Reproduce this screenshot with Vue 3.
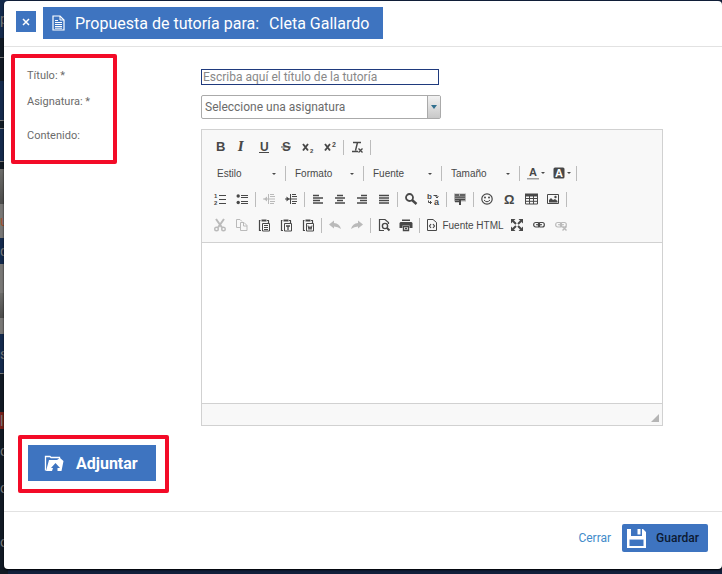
<template>
  <div class="page">
    <div class="backdrop" aria-hidden="true">
      <div v-for="(s, i) in strips" :key="i" class="strip" :class="s.kind" :style="{ height: s.h + 'px' }">{{ s.text }}</div>
    </div>

    <form class="modal" role="dialog" aria-labelledby="modal-title" @submit.prevent>
      <header class="modal-header">
        <button type="button" class="close" aria-label="Cerrar ventana">
          <svg width="8" height="8" viewBox="0 0 8 8"><path d="M1 1l6 6M7 1l-6 6" stroke="#fff" stroke-width="1.5" /></svg>
        </button>
        <h1 id="modal-title" class="title">
          <svg width="13" height="16" viewBox="0 0 13 16">
            <path d="M1 1h7l4 4v10H1z" fill="none" stroke="#fff" stroke-width="1.2" />
            <path d="M8 1v4h4" fill="none" stroke="#fff" />
            <path d="M3 5.5h3M3 7.5h7M3 9.5h7M3 11.5h7M3 13.2h7" stroke="#fff" />
          </svg>
          <span>Propuesta de tutoría para:</span>
          <span>Cleta Gallardo</span>
        </h1>
      </header>

      <div class="modal-body">
        <div class="form-row">
          <div class="labels">
            <label for="titulo">Título: *</label>
            <label for="asignatura">Asignatura: *</label>
            <label for="contenido" class="label-content">Contenido:</label>
          </div>

          <div class="fields">
            <input id="titulo" v-model="titulo" type="text" class="text-input" placeholder="Escriba aquí el título de la tutoría" />
            <div class="select-box">
              <select id="asignatura" v-model="asignatura">
                <option value="">Seleccione una asignatura</option>
              </select>
              <span class="select-arrow">
                <svg width="6" height="4" viewBox="0 0 6 4"><path d="M0 0h6L3 4z" fill="#31708f" /></svg>
              </span>
            </div>

            <div class="editor">
              <div class="toolbar">
                <div v-for="(row, r) in rows" :key="r" class="tool-row" :class="{ 'combo-row': r === 1 }">
                  <template v-for="(tool, t) in row" :key="t">
                    <span v-if="tool === '|'" class="sep"></span>
                    <span v-else-if="tool.combo" class="combo">
                      <select :aria-label="tool.combo"><option>{{ tool.combo }}</option></select>
                      <svg class="caret" width="4" height="2" viewBox="0 0 4 2"><path d="M0 0h4L2 2z" /></svg>
                    </span>
                    <button
                      v-else
                      type="button"
                      class="tool"
                      :class="{ off: tool.off, color: tool.menu, wide: tool.text }"
                      :title="tool.title"
                    >
                      <svg width="16" height="16" viewBox="0 0 16 16" v-html="icons[tool.icon]"></svg>
                      <span v-if="tool.text">{{ tool.text }}</span>
                      <svg v-if="tool.menu" width="4" height="2" viewBox="0 0 4 2"><path d="M0 0h4L2 2z" /></svg>
                    </button>
                  </template>
                </div>
              </div>
              <textarea id="contenido" v-model="contenido"></textarea>
              <div class="editor-bottom">
                <svg width="8" height="8" viewBox="0 0 8 8"><path d="M8 0v8H0z" fill="#b5b5b5" /></svg>
              </div>
            </div>
          </div>
        </div>

        <div class="attach-box">
          <button type="button" class="attach">
            <svg width="20" height="17" viewBox="0 0 20 17">
              <path d="M1.5 15.5v-14H6l1 1h8.5v2" fill="none" stroke="#fff" stroke-width="1.3" />
              <path d="M2 16L5 5h8l3-2 3.5 3-2 10h-4v-3H16l-4.5-5L7 13h2l-1 3z" fill="#fff" />
            </svg>
            Adjuntar
          </button>
        </div>
      </div>

      <footer class="modal-footer">
        <a href="#" class="cancel" @click.prevent>Cerrar</a>
        <button type="submit" class="save">
          <svg width="19" height="19" viewBox="0 0 19 19">
            <path d="M0 0h4v7h11V0h1l3 3v16H0z" fill="#fff" />
            <path d="M10.5 0h3v5.5h-3z" fill="#fff" />
            <path d="M2.5 10.5h14V17h-14z" fill="#3e74c0" />
            <path d="M3 10.5h13" stroke="#a9c3e8" />
          </svg>
          Guardar
        </button>
      </footer>
    </form>
  </div>
</template>

<script setup>
import { ref } from 'vue'

const titulo = ref('')
const asignatura = ref('')
const contenido = ref('')

// edge of the page that stays visible behind the dialog
const strips = [
  { h: 38, kind: 'blue', text: 'p' },
  { h: 19, kind: 'dark' },
  { h: 1, kind: 'line' },
  { h: 23, kind: 'dark' },
  { h: 39, kind: 'blue' },
  { h: 1, kind: 'line' },
  { h: 7, kind: 'dark' },
  { h: 1, kind: 'line' },
  { h: 32, kind: 'blue' },
  { h: 1, kind: 'line' },
  { h: 7, kind: 'dark' },
  { h: 35, kind: 'grey' },
  { h: 34, kind: 'light orange', text: 'u' },
  { h: 26, kind: 'blue', text: 'd' },
  { h: 29, kind: 'light' },
  { h: 25, kind: 'grey' },
  { h: 16, kind: 'light' },
  { h: 39, kind: 'blue', text: 's' },
  { h: 1, kind: 'line' },
  { h: 38, kind: 'dark' },
  { h: 17, kind: 'red', text: 'l' },
  { h: 44, kind: 'dark', text: 'o' },
  { h: 30, kind: 'dark', text: 'o' },
  { h: 78, kind: 'dark', text: 'o' },
]

const rows = [
  [
    { icon: 'bold', title: 'Negrita' },
    { icon: 'italic', title: 'Cursiva' },
    { icon: 'underline', title: 'Subrayado' },
    { icon: 'strike', title: 'Tachado' },
    { icon: 'sub', title: 'Subíndice' },
    { icon: 'sup', title: 'Superíndice' },
    '|',
    { icon: 'clear', title: 'Eliminar formato' },
    '|',
  ],
  [
    { combo: 'Estilo' },
    '|',
    { combo: 'Formato' },
    '|',
    { combo: 'Fuente' },
    '|',
    { combo: 'Tamaño' },
    '|',
    { icon: 'textColor', title: 'Color de texto', menu: true },
    { icon: 'bgColor', title: 'Color de fondo', menu: true },
    '|',
  ],
  [
    { icon: 'ol', title: 'Lista numerada' },
    { icon: 'ul', title: 'Lista con viñetas' },
    '|',
    { icon: 'outdent', title: 'Disminuir sangría', off: true },
    { icon: 'indent', title: 'Aumentar sangría' },
    '|',
    { icon: 'left', title: 'Alinear a la izquierda' },
    { icon: 'center', title: 'Centrar' },
    { icon: 'right', title: 'Alinear a la derecha' },
    { icon: 'justify', title: 'Justificar' },
    '|',
    { icon: 'find', title: 'Buscar' },
    { icon: 'replace', title: 'Reemplazar' },
    '|',
    { icon: 'selectAll', title: 'Seleccionar todo' },
    '|',
    { icon: 'smiley', title: 'Emoticonos' },
    { icon: 'omega', title: 'Carácter especial' },
    { icon: 'table', title: 'Tabla' },
    { icon: 'image', title: 'Imagen' },
    '|',
  ],
  [
    { icon: 'cut', title: 'Cortar', off: true },
    { icon: 'copy', title: 'Copiar', off: true },
    { icon: 'paste', title: 'Pegar' },
    { icon: 'pasteText', title: 'Pegar como texto plano' },
    { icon: 'pasteWord', title: 'Pegar desde Word' },
    '|',
    { icon: 'undo', title: 'Deshacer', off: true },
    { icon: 'redo', title: 'Rehacer', off: true },
    '|',
    { icon: 'preview', title: 'Vista previa' },
    { icon: 'print', title: 'Imprimir' },
    '|',
    { icon: 'source', title: 'Fuente HTML', text: 'Fuente HTML' },
    { icon: 'maximize', title: 'Maximizar' },
    { icon: 'link', title: 'Insertar vínculo' },
    { icon: 'unlink', title: 'Eliminar vínculo', off: true },
  ],
]

const stroke = 'fill="none" stroke="currentColor"'
const clipboard =
  `<path d="M4.5 3.5h-1v10H5M12.5 3.5V6" ${stroke} stroke-width="1.2"/><path d="M5.5 2.5h5v2h-5z"/><path d="M11 3h2v1h-2z"/>` +
  `<path d="M6.5 6.5h7V14h-7z" ${stroke}/>`
const chain =
  `<rect x="2.7" y="5.5" width="6" height="4.5" rx="2" ${stroke} stroke-width="1.2"/>` +
  `<rect x="7.3" y="5.5" width="6" height="4.5" rx="2" ${stroke} stroke-width="1.2"/><path d="M5 7.7h6" ${stroke}/>`

const icons = {
  bold: '<text x="4" y="12" font-size="13" font-weight="bold">B</text>',
  italic: '<text x="4" y="12" font-size="12" font-weight="bold" font-style="italic" font-family="DejaVu Serif">I</text>',
  underline: `<text x="4" y="12" font-size="12" font-weight="bold">U</text><path d="M3 13.5h10" ${stroke}/>`,
  strike: `<text x="4" y="12" font-size="13" font-weight="bold">S</text><path d="M3 8h10" ${stroke}/>`,
  sub: `<path d="M3 5l5 6.5M8 5l-5 6.5" ${stroke} stroke-width="1.9"/><text x="10" y="14" font-size="6" font-weight="bold">2</text>`,
  sup: `<path d="M3 5l5 6.5M8 5l-5 6.5" ${stroke} stroke-width="1.9"/><text x="10" y="8" font-size="7" font-weight="bold">2</text>`,
  clear: `<path d="M4 3.5h8M8.5 3.5l-2 8M3 12.5h6" ${stroke} stroke-width="1.4"/><path d="M9.5 9.5l4 4M13.5 9.5l-4 4" ${stroke} stroke-width="1.3"/>`,
  textColor: '<text x="4" y="11" font-size="11" font-weight="bold">A</text><path d="M2 13h12v1.5H2z" opacity=".5"/>',
  bgColor: '<rect x="2.5" y="2.5" width="11" height="11" rx="1.5"/><text x="4" y="12" font-size="11" font-weight="bold" fill="#fff">A</text>',
  ol: `<path d="M7 4.5h7M7 8.5h7M7 12.5h7" ${stroke}/><text x="2" y="7" font-size="6" font-weight="bold">1</text><text x="2" y="14" font-size="6" font-weight="bold">2</text>`,
  ul: `<path d="M7 4.5h7M7 6.5h7M7 10.5h7M7 12.5h7" ${stroke}/><circle cx="4.2" cy="5" r="1.7"/><circle cx="4.2" cy="11.5" r="1.7"/>`,
  outdent: `<path d="M9 3.5h4M9 5.5h5M9 10.5h5M9 12.5h4M2 8h12M7.5 3v10" ${stroke}/><path d="M6 5.5v5L3 8z"/>`,
  indent: `<path d="M9 3.5h4M9 5.5h5M9 10.5h5M9 12.5h4M2 8h12M7.5 3v10" ${stroke}/><path d="M3.5 5.5v5L6.5 8z"/>`,
  left: `<path d="M3 4.5h6M3 7h10M3 9.5h7M3 12h10" ${stroke} stroke-width="1.7"/>`,
  center: `<path d="M5 4.5h6M3 7h10M5 9.5h6M3 12h10" ${stroke} stroke-width="1.7"/>`,
  right: `<path d="M7 4.5h6M3 7h10M6 9.5h7M3 12h10" ${stroke} stroke-width="1.7"/>`,
  justify: `<path d="M3 4.5h10M3 7h10M3 9.5h10M3 12h10" ${stroke} stroke-width="1.7"/>`,
  find: `<circle cx="6.5" cy="6.5" r="3.5" ${stroke} stroke-width="1.8"/><path d="M9 9l4.5 4" ${stroke} stroke-width="2.4"/>`,
  replace: `<text x="2" y="8" font-size="8" font-weight="bold">b</text><text x="9" y="14" font-size="9" font-weight="bold">a</text><path d="M8.5 4.5H12v2M3.5 9.5v2h3M10.5 5.5L12 7l1.5-1.5M5 10l1.5 1.5L5 13" ${stroke}/>`,
  selectAll: `<path d="M2 2.5h12v8H2z" opacity=".4"/><path d="M3 4h4M8 4h5M3 6.2h10M3 8.5h10M3 10.5h6" ${stroke} stroke-width="1.3"/><path d="M7 9h2v5H7z"/>`,
  smiley: `<circle cx="8" cy="8" r="5.2" ${stroke} stroke-width="1.2"/><circle cx="6" cy="6.5" r="1"/><circle cx="10" cy="6.5" r="1"/><path d="M5 9q3 3.5 6 0" ${stroke}/>`,
  omega: '<text x="3" y="13" font-size="13" font-weight="bold">Ω</text>',
  table: `<path d="M2 2.5h13v3H2z"/><path d="M2.5 3v10h12V3M2.5 7.5h12M2.5 10.3h12M6.5 5v8M10.5 5v8" ${stroke}/>`,
  image: `<path d="M2.5 3.5h11v9h-11z" ${stroke}/><path d="M4 11.5V9l2-2 2 2 2-1 2.5 2v1.5z"/><circle cx="10.5" cy="6" r="1.2"/>`,
  cut: `<path d="M4 2l6 8.5M12 2l-6 8.5" ${stroke} stroke-width="2"/><circle cx="4.5" cy="12" r="1.8" ${stroke} stroke-width="1.4"/><circle cx="11.5" cy="12" r="1.8" ${stroke} stroke-width="1.4"/>`,
  copy: `<path d="M6 10.5H2.5v-8H6l2 2" ${stroke}/><path d="M6.5 5.5H10l3 3v5H6.5zM9.5 5.5V9H13" ${stroke}/>`,
  paste: `${clipboard}<path d="M8 8.5h4M8 10.5h4M8 12.5h4" ${stroke}/>`,
  pasteText: `${clipboard}<path d="M8 9h4M10 9v4" ${stroke} stroke-width="1.3"/>`,
  pasteWord: `${clipboard}<path d="M8 8.5l1 4 1-3 1 3 1-4" ${stroke}/>`,
  undo: '<path d="M2 7.5l5-4V6q5.5.5 7 6-3-2.5-7-2.5v2z"/>',
  redo: '<path d="M14 7.5l-5-4V6q-5.5.5-7 6 3-2.5 7-2.5v2z"/>',
  preview: `<path d="M8 13.5H3.5v-11H9l3.5 3V7" ${stroke} stroke-width="1.2"/><circle cx="9" cy="9" r="2.6" ${stroke} stroke-width="1.4"/><path d="M11 11l2.5 2.5" ${stroke} stroke-width="2"/>`,
  print: `<path d="M4 2.5h8V4H4zM2.5 5h11l1 1v5h-3V8.5h-7V11h-3V6z"/><path d="M5.5 9.5h5v4h-5zM7 11.5h2" ${stroke} stroke-width="1.4"/>`,
  source: `<path d="M3.5 2.5H9l3.5 3v8h-9z" ${stroke}/><path d="M7 7L5.5 9 7 11M9 7l1.5 2L9 11" ${stroke} stroke-width="1.2"/>`,
  maximize: `<path d="M2 2h4.5L2 6.5zM14 2v4.5L9.5 2zM2 14V9.5L6.5 14zM14 14H9.5L14 9.5z"/><path d="M4 4l3 3M12 4L9 7M4 12l3-3M12 12L9 9" ${stroke} stroke-width="2"/>`,
  link: chain,
  unlink: `${chain}<path d="M9.5 9.5l4 4M13.5 9.5l-4 4" ${stroke} stroke-width="1.4"/>`,
}
</script>

<style>
body {
  background: #11203b;
}
</style>

<style scoped>
* {
  box-sizing: border-box;
}

.page {
  min-height: 100vh;
  padding: 1px 0 5px 4px;
  font-family: Roboto, 'Noto Sans', sans-serif;
  color: #6b6b6b;
}

button,
input,
select,
textarea {
  font-family: inherit;
  color: inherit;
  border: 0;
  border-radius: 0;
  margin: 0;
  padding: 0;
}

button {
  cursor: pointer;
}

/* page behind the dialog */
.backdrop {
  position: absolute;
  top: 0;
  left: 0;
  width: 8px;
}

.strip {
  display: flex;
  align-items: center;
  overflow: hidden;
  font-size: 14px;
  color: #777;
}

.blue {
  background: #142a4c;
}

.dark {
  background: #111a24;
}

.line {
  background: #777;
}

.grey {
  background: linear-gradient(#6c6c6a, #4c4c4b);
}

.light {
  background: #787775;
}

.orange {
  color: #a5502c;
}

.red {
  background: #75201a;
}

.modal {
  position: relative;
  background: #fff;
  border-radius: 4px;
  box-shadow: 0 1px 2px #000;
}

.modal-header {
  display: flex;
  align-items: flex-start;
  gap: 7px;
  padding: 6px 12px 7px;
  border-bottom: 1px solid #e2e2e2;
}

.close {
  display: flex;
  align-items: center;
  justify-content: center;
  width: 20px;
  height: 21px;
  margin-top: 4px;
  background: #3e74c0;
}

.title {
  display: flex;
  align-items: center;
  gap: 10px;
  height: 32px;
  margin: 0;
  padding: 0 14px 0 9px;
  background: #3e74c0;
  color: #fff;
  font-size: 16px;
  font-weight: 400;
}

.modal-body {
  padding: 7px 0 18px 7px;
}

.form-row {
  display: flex;
  align-items: flex-start;
}

/* highlighted areas */
.labels,
.attach-box {
  border: 4px solid #f30b27;
  border-radius: 2px;
}

.labels {
  display: flex;
  flex-direction: column;
  gap: 10px;
  width: 106px;
  padding: 10px 0 16px 12px;
  font-size: 11px;
  line-height: 16px;
}

.label-content {
  margin-top: 8px;
}

.fields {
  flex: 1;
  min-width: 0;
  padding: 15px 59px 0 84px;
}

.text-input {
  display: block;
  width: 100%;
  max-width: 238px;
  height: 16px;
  padding: 0 1px;
  border: 1px solid #1f3a7d;
  font-size: 12px;
}

.text-input::placeholder {
  color: #888;
}

.select-box {
  position: relative;
  max-width: 240px;
  margin: 10px 0;
}

.select-box select {
  display: block;
  width: 100%;
  height: 24px;
  padding: 0 20px 0 3px;
  border: 1px solid #aaa;
  border-radius: 2px;
  background: #fff;
  font-size: 12px;
  appearance: none;
}

.select-arrow {
  position: absolute;
  top: 1px;
  right: 1px;
  bottom: 1px;
  display: flex;
  align-items: center;
  justify-content: center;
  width: 13px;
  border-left: 1px solid #aaa;
  background: linear-gradient(#f2f2f2, #c8c8c8);
  pointer-events: none;
}

.editor {
  border: 1px solid #d1d1d1;
}

.toolbar {
  display: flex;
  flex-direction: column;
  gap: 4px;
  padding: 6px 6px 6px 7px;
  background: #f8f8f8;
  border-bottom: 1px solid #d1d1d1;
  font-family: 'Liberation Sans', Arial, sans-serif;
  color: #484848;
}

.tool-row {
  display: flex;
  align-items: center;
  height: 22px;
}

.combo-row {
  padding-left: 1px;
}

.sep {
  width: 1px;
  height: 15px;
  margin: 0 2px;
  background: #bcbcbc;
}

.tool {
  display: flex;
  align-items: center;
  justify-content: center;
  width: 22px;
  height: 22px;
  background: none;
  font-size: 10px;
}

.tool svg {
  overflow: visible;
}

.tool svg,
.caret {
  flex: none;
  fill: currentColor;
}

.wide {
  gap: 2px;
  width: 84px;
}

.color {
  width: 26px;
}

.off {
  opacity: 0.35;
}

.combo {
  position: relative;
  width: 73px;
}

.combo select {
  display: block;
  width: 100%;
  height: 22px;
  padding-left: 7px;
  background: none;
  font-size: 10px;
  appearance: none;
}

.caret {
  position: absolute;
  top: 11px;
  right: 7px;
  pointer-events: none;
}

textarea {
  display: block;
  width: 100%;
  height: 160px;
  padding: 8px;
  resize: none;
  font-size: 13px;
}

.editor-bottom {
  display: flex;
  align-items: flex-end;
  justify-content: flex-end;
  height: 22px;
  padding: 3px;
  background: #f8f8f8;
  border-top: 1px solid #d1d1d1;
}

.attach-box {
  width: fit-content;
  margin: 9px 0 0 7px;
  padding: 6px 9px 8px 6px;
}

.attach {
  display: flex;
  align-items: center;
  gap: 12px;
  height: 36px;
  padding: 0 18px 0 16px;
  background: #3e74c0;
  color: #fff;
  font-size: 16px;
  font-weight: 700;
}

.modal-footer {
  display: flex;
  align-items: center;
  justify-content: flex-end;
  gap: 11px;
  padding: 12px 14px 17px;
  border-top: 1px solid #e2e2e2;
}

.cancel {
  color: #428bca;
  font-size: 12px;
  text-decoration: none;
}

.save {
  display: flex;
  align-items: center;
  gap: 10px;
  height: 28px;
  padding: 0 9px 0 5px;
  border-radius: 2px;
  background: #3e74c0;
  color: #0c1a33;
  font-size: 12px;
  font-weight: 500;
}
</style>
